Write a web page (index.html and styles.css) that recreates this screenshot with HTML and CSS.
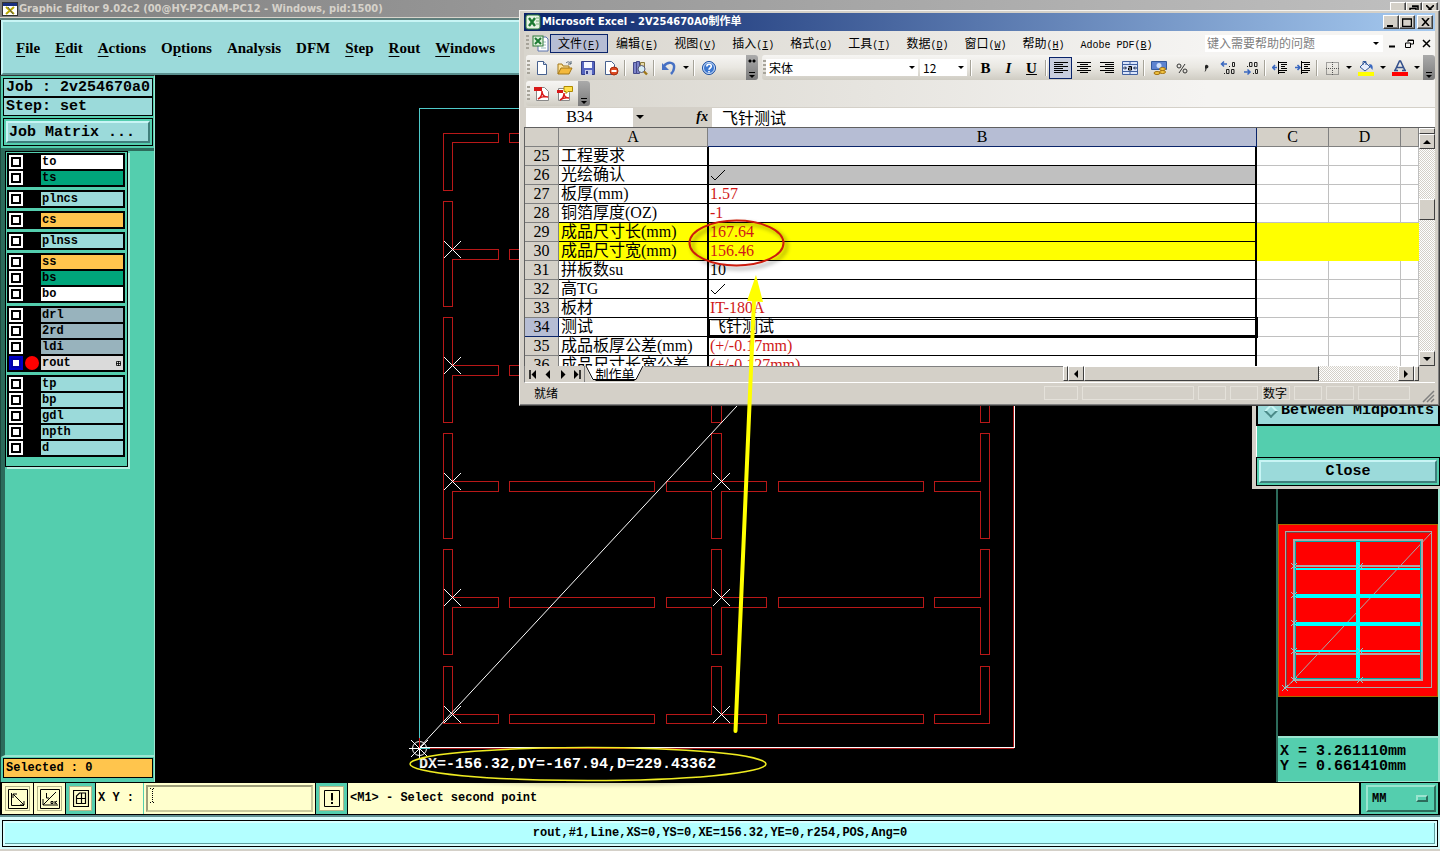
FILE: index.html
```
<!DOCTYPE html>
<html lang="zh-CN">
<head>
<meta charset="utf-8">
<title>Graphic Editor 9.02c2</title>
<link rel="stylesheet" href="styles.css">
</head>
<body>
<div class="desktop">
  <header class="app-title">
    <svg class="app-icon" width="16" height="14" viewBox="0 0 16 14"><rect x=".5" y=".5" width="15" height="13" fill="#fff" stroke="#333"/><rect x="1" y="1" width="14" height="3" fill="#1a2f80"/><path d="M4 5l8 7M12 5l-8 7" stroke="#b8a800" stroke-width="2"/><path d="M6 5l5 7" stroke="#555"/></svg>
    <span class="app-name">Graphic Editor 9.02c2 (00@HY-P2CAM-PC12 - Windows, pid:1500)</span>
    <div class="app-buttons">
      <button class="winbtn" aria-label="Minimize app"></button><button class="winbtn" aria-label="Restore app"><svg width="10" height="9" viewBox="0 0 10 9"><path d="M3 1h6v5H7M1 3.500h6v5H1zM3 1.500h6" fill="none" stroke="#000" stroke-width="1.500"/></svg></button><button class="winbtn" aria-label="Close app"><svg width="8" height="8" viewBox="0 0 8 8"><path d="M0 0l8 8M8 0L0 8" stroke="#000" stroke-width="1.600"/></svg></button>
    </div>
  </header>

  <nav class="app-menu">
    <button><u>F</u>ile</button><button><u>E</u>dit</button><button><u>A</u>ctions</button><button>O<u>p</u>tions</button><button>Analysis</button><button>DFM</button><button><u>S</u>tep</button><button><u>R</u>out</button><button><u>W</u>indows</button>
  </nav>

  <main class="workspace">
    <aside class="sidebar">
      <div class="job-info">
        <div class="job-line">Job : 2v254670a0</div>
        <div class="job-line">Step: set</div>
      </div>
      <div class="matrix-frame"><button class="bevel-btn matrix-btn">Job Matrix ...</button></div>
      <div class="layers-well">
        <div class="layers">
          <div class="group">
            <label class="layer"><input type="checkbox"><i class="dot"></i><span class="name white">to</span></label>
            <label class="layer"><input type="checkbox"><i class="dot"></i><span class="name green">ts</span></label>
          </div>
          <div class="group"><label class="layer"><input type="checkbox"><i class="dot"></i><span class="name">plncs</span></label></div>
          <div class="group"><label class="layer"><input type="checkbox"><i class="dot"></i><span class="name orange">cs</span></label></div>
          <div class="group"><label class="layer"><input type="checkbox"><i class="dot"></i><span class="name">plnss</span></label></div>
          <div class="group">
            <label class="layer"><input type="checkbox"><i class="dot"></i><span class="name orange">ss</span></label>
            <label class="layer"><input type="checkbox"><i class="dot"></i><span class="name green">bs</span></label>
            <label class="layer"><input type="checkbox"><i class="dot"></i><span class="name white">bo</span></label>
          </div>
          <div class="group">
            <label class="layer"><input type="checkbox"><i class="dot"></i><span class="name slate">drl</span></label>
            <label class="layer"><input type="checkbox"><i class="dot"></i><span class="name slate">2rd</span></label>
            <label class="layer"><input type="checkbox"><i class="dot"></i><span class="name slate">ldi</span></label>
            <label class="layer"><input type="checkbox" checked><i class="dot on"></i><span class="name gray">rout<svg width="5" height="5" viewBox="0 0 5 5"><path d="M.5.5h4v4h-4zM2.500 0v5M0 2.500h5" fill="none" stroke="#000" stroke-width=".8"/></svg></span></label>
          </div>
          <div class="group">
            <label class="layer"><input type="checkbox"><i class="dot"></i><span class="name">tp</span></label>
            <label class="layer"><input type="checkbox"><i class="dot"></i><span class="name">bp</span></label>
            <label class="layer"><input type="checkbox"><i class="dot"></i><span class="name">gdl</span></label>
            <label class="layer"><input type="checkbox"><i class="dot"></i><span class="name">npth</span></label>
            <label class="layer"><input type="checkbox"><i class="dot"></i><span class="name">d</span></label>
          </div>
        </div>
      </div>
      <div class="selected">Selected : 0</div>
    </aside>

    <section class="board">
      <svg class="board-art" width="1121" height="707" viewBox="155 75 1121 707" shape-rendering="crispEdges">
        <defs>
          <g id="joint">
            <path d="M443.500 201.500H452.500V249.500H498.500V259.500H452.500V306.500H443.500Z"/>
            <path d="M509.500 249.500H654.500V259.500H509.500ZM778.500 249.500H923.500V259.500H778.500Z"/>
            <path d="M711.500 201.500H721.500V249.500H766.500V259.500H721.500V306.500H711.500V259.500H666.500V249.500H711.500Z"/>
            <path d="M989.500 201.500H980.500V249.500H934.500V259.500H980.500V306.500H989.500Z"/>
          </g>
          <path id="cross" d="M-8.500-8.500L8.500 8.500M8.500-8.500L-8.500 8.500"/>
        </defs>
        <path d="M419.500 748V108.500H1014" fill="none" stroke="#4fc9c9"/>
        <path d="M419 748.500H1013.500V108" fill="none" stroke="#a81414"/>
        <path d="M419 747.500H1014.500V108" fill="none" stroke="#fff"/>
        <g fill="none" stroke="#b91818">
          <path d="M443.500 190.500V133.500H498.500V142.500H452.500V190.500ZM509.500 133.500H654.500V142.500H509.500Z"/>
          <use href="#joint"/><use href="#joint" y="116"/><use href="#joint" y="232"/><use href="#joint" y="348"/>
          <path d="M443.500 666.500H452.500V714.500H498.500V723.500H443.500ZM509.500 714.500H654.500V723.500H509.500ZM711.500 666.500H721.500V714.500H766.500V723.500H666.500V714.500H711.500ZM778.500 714.500H923.500V723.500H778.500ZM980.500 666.500H989.500V723.500H934.500V714.500H980.500Z"/>
        </g>
        <g stroke="#fff" shape-rendering="auto">
          <path d="M419 748L1014 108"/>
          <use href="#cross" x="452.500" y="249.500"/><use href="#cross" x="452.500" y="365.500"/><use href="#cross" x="452.500" y="481.500"/><use href="#cross" x="452.500" y="597.500"/><use href="#cross" x="452.500" y="714.500"/>
          <use href="#cross" x="721.500" y="481.500"/><use href="#cross" x="721.500" y="597.500"/><use href="#cross" x="721.500" y="714.500"/>
        </g>
        <g fill="none" stroke="#fff" shape-rendering="auto"><circle cx="419.500" cy="748.500" r="7"/><path d="M409 748.500h21M419.500 738v21M411 740l17 17M428 740l-17 17"/></g>
        <path d="M419.500 738v10" stroke="#d01818"/><path d="M420 748.500h10" stroke="#4fc9c9"/>
        <text class="readout" x="419" y="768">DX=-156.32,DY=-167.94,D=229.43362</text>
      </svg>
    </section>

    <aside class="overview">
      <div class="overview-map">
        <svg width="100%" viewBox="1278 524 160 173" shape-rendering="crispEdges">
          <rect x="1278.500" y="524.500" width="159" height="172" fill="#f00" stroke="#a86a00"/>
          <g fill="none" stroke="#a9a9a9"><rect x="1285.500" y="531.500" width="146" height="156"/><rect x="1294" y="540" width="128" height="140" stroke-width="2"/><path d="M1286 688L1431 533" shape-rendering="auto"/><path d="M1294 566h128M1294 654h128" stroke-width="2"/></g>
          <path d="M1286.500 687V532.500H1430" fill="none" stroke="#744"/>
          <path d="M1358 540v140" stroke="#0ff" stroke-width="4"/><path d="M1294 596h128M1294 624h128" stroke="#0ff" stroke-width="4"/><path d="M1294 569h128M1294 651h128" stroke="#0ff" stroke-width="2"/>
          <rect x="1295.500" y="541.500" width="125" height="137" fill="none" stroke="#0aa"/>
          <path d="M1291 563l6 6m0-6l-6 6M1291 592l6 6m0-6l-6 6M1291 620l6 6m0-6l-6 6M1291 648l6 6m0-6l-6 6M1291 677l6 6m0-6l-6 6M1357 563l6 6m0-6l-6 6M1357 648l6 6m0-6l-6 6M1357 677l6 6m0-6l-6 6M1282 685l6 6m0-6l-6 6" stroke="#8cc" fill="none"/>
        </svg>
      </div>
      <div class="coords"><div>X = 3.261110mm</div><div>Y = 0.661410mm</div></div>
    </aside>
  </main>

  <section class="command-bar">
    <button class="tool" aria-label="Zoom area"><svg width="20" height="20" viewBox="0 0 20 20" fill="none" stroke="#000"><path d="M.5.500h19v19H.5zM3.500 4v12.500H16M5 5l11 11M5 9V5h4M16 12v4h-4"/></svg></button>
    <button class="tool" aria-label="Angle"><svg width="20" height="20" viewBox="0 0 20 20" fill="none" stroke="#000"><path d="M.5.500h19v19H.5zM16 3L3 16h15M6.500 4v5H9M3 10v6M11 12.500h2v2h-2zM15 12v3M17 12l-2 1.500 2 1.500"/></svg></button>
    <button class="tool framed" aria-label="Grid"><svg width="16" height="17" viewBox="0 0 16 17" fill="none" stroke="#000"><path d="M.5.500h15v16H.5zM3.500 13.500V6l3-3h6v10.500zM8.500 3v11M3 8.500h10" stroke-width="1.200"/></svg></button>
    <label class="xy-label" for="xy">X Y :</label>
    <div class="xy-field">
      <input class="xy-input" id="xy" type="text">
      <svg class="ibeam" width="5" height="15" viewBox="0 0 5 15" shape-rendering="crispEdges"><path d="M2.500 1v13M0 .5h2M3 .5h2M0 14.500h2M3 14.500h2" stroke="#000" stroke-dasharray="1 1"/></svg>
    </div>
    <button class="tool framed warn" aria-label="Alert"><svg width="16" height="17" viewBox="0 0 16 17"><path d="M.5.500h15v16H.5z" fill="none" stroke="#000"/><path d="M8 3v7.500M8 12v2" stroke="#000" stroke-width="2"/></svg></button>
    <div class="message">&lt;M1&gt; - Select second point</div>
    <div class="unit-frame"><button class="unit">MM<i class="unit-mark"></i></button></div>
  </section>
  <footer class="info-bar"><div class="info-text">rout,#1,Line,XS=0,YS=0,XE=156.32,YE=0,r254,POS,Ang=0</div></footer>

  <section class="dialog">
    <label class="dialog-option"><input type="radio" name="snap"><span>Between Midpoints</span></label>
    <div class="dialog-foot"><button class="bevel-btn close-btn">Close</button></div>
  </section>

  <section class="excel">
    <header class="xl-title">
      <svg width="16" height="16" viewBox="0 0 16 16"><rect x="1" y="1" width="14" height="14" rx="2" fill="#e8f3e4" stroke="#2f7d3b"/><path d="M4 4l6 8M10 4l-6 8" stroke="#1d7a33" stroke-width="2.400"/><path d="M11 4h3M11 7h3M11 10h3" stroke="#7ab07a"/></svg>
      <h1>Microsoft Excel - 2V254670A0制作单</h1>
      <button class="winbtn" aria-label="Minimize"><svg width="10" height="9" viewBox="0 0 10 9"><path d="M1 8h6" stroke="#000" stroke-width="2"/></svg></button><button class="winbtn" aria-label="Maximize"><svg width="10" height="9" viewBox="0 0 10 9"><path d="M.5 1v7.500h9V1M0 1h10" fill="none" stroke="#000" stroke-width="1.500"/></svg></button><button class="winbtn gap" aria-label="Close"><svg width="9" height="8" viewBox="0 0 9 8"><path d="M1 0l7 8M8 0L1 8" stroke="#000" stroke-width="1.600"/></svg></button>
    </header>

    <nav class="xl-menu">
      <i class="grip"></i>
      <svg width="17" height="17" viewBox="0 0 17 17"><path d="M6 2h8l2 2v12H6z" fill="#fff" stroke="#5a73ae"/><path d="M9 7h5M9 10h5M9 13h5" stroke="#9bb"/><rect x="1" y="1" width="10" height="10" fill="#dff0dc" stroke="#2f7d3b"/><path d="M3 3l6 6M9 3L3 9" stroke="#1d7a33" stroke-width="2"/></svg>
      <button class="active">文件<span>(<u>F</u>)</span></button><button>编辑<span>(<u>E</u>)</span></button><button>视图<span>(<u>V</u>)</span></button><button>插入<span>(<u>I</u>)</span></button><button>格式<span>(<u>O</u>)</span></button><button>工具<span>(<u>T</u>)</span></button><button>数据<span>(<u>D</u>)</span></button><button>窗口<span>(<u>W</u>)</span></button><button>帮助<span>(<u>H</u>)</span></button><button><span>Adobe PDF(<u>B</u>)</span></button>
      <div class="help-box"><input type="text" placeholder="键入需要帮助的问题" aria-label="帮助"><i class="caret"></i></div>
      <button class="mini" aria-label="Minimize sheet"><svg width="9" height="9" viewBox="0 0 9 9"><path d="M1 7.500h6" stroke="#000" stroke-width="2"/></svg></button>
      <button class="mini" aria-label="Restore sheet"><svg width="9" height="9" viewBox="0 0 9 9"><path d="M3 3V1h5.500v4H6M.5 4h5v4.500h-5zM3 1.500h5" fill="none" stroke="#000"/></svg></button>
      <button class="mini last" aria-label="Close sheet"><svg width="9" height="9" viewBox="0 0 9 9"><path d="M1 1l7 7M8 1L1 8" stroke="#000" stroke-width="1.500"/></svg></button>
    </nav>

    <div class="xl-toolbars">
      <div class="toolbar std">
        <i class="grip"></i>
        <button aria-label="新建"><svg viewBox="0 0 16 16"><path d="M3.500 1.500h6l3 3v10h-9z" fill="#fff" stroke="#47618f"/><path d="M9.500 1.500v3h3" fill="#cfd9ec" stroke="#47618f"/></svg></button>
        <button aria-label="打开"><svg viewBox="0 0 16 16"><path d="M1 14V4h4l1 2h6v2" fill="#ffe49a" stroke="#a37716"/><path d="M1 14l3-6h11l-3 6z" fill="#f3b93c" stroke="#a37716"/><path d="M9 3c2-2 4-1 5 1m0-3v3h-3" fill="none" stroke="#567"/></svg></button>
        <button aria-label="保存"><svg viewBox="0 0 16 16"><path d="M1.500 1.500h13v13h-13z" fill="#5565c0" stroke="#353f88"/><path d="M4 2h8v6H4z" fill="#f4f6ff"/><path d="M5 10h7v5H5z" fill="#c8cdea"/><path d="M6 11h2v3H6z" fill="#353f88"/></svg></button>
        <button aria-label="权限"><svg viewBox="0 0 16 16"><path d="M2.500 1.500h6l3 3v10h-9z" fill="#fff" stroke="#47618f"/><circle cx="11" cy="11" r="4" fill="#dd4a22" stroke="#a52b0c"/><path d="M8.500 11h5" stroke="#fff" stroke-width="2"/></svg></button>
        <i class="sep"></i>
        <button aria-label="信息检索"><svg viewBox="0 0 16 16"><path d="M1.500 2.500h3v11h-3zM4.500 1.500h3v12h-3z" fill="#7d83c8" stroke="#454a8a"/><path d="M8.500 2.500h4v9h-4z" fill="#e6d9a8" stroke="#8a7a3c"/><circle cx="9.500" cy="9" r="3.500" fill="#d5ecf5" stroke="#557"/><path d="M12 11.500l3 3" stroke="#a07818" stroke-width="2.400"/></svg></button>
        <i class="sep"></i>
        <button aria-label="撤消"><svg viewBox="0 0 16 16"><path d="M3 6c4-5 11-4 10 2 0 3-2 5-3 6" fill="none" stroke="#4771c4" stroke-width="2.500"/><path d="M1 3v7h7z" fill="#4771c4"/></svg></button>
        <button class="drop" aria-label="撤消列表"><i class="caret"></i></button>
        <i class="sep"></i>
        <button aria-label="帮助主题"><svg viewBox="0 0 16 16"><circle cx="8" cy="8" r="6.500" fill="#3d78d0" stroke="#1d4f9f"/><circle cx="8" cy="8" r="5.500" fill="none" stroke="#cfe0fa"/><path d="M5.800 6.500c0-3 4.500-3 4.500-.3C10.300 8 8 8 8 9.800M8 11v1.600" fill="none" stroke="#fff" stroke-width="1.600"/></svg></button>
        <i class="cap more"></i>
      </div>
      <div class="toolbar fmt">
        <i class="grip"></i>
        <span class="combo font"><select aria-label="字体"><option>宋体</option></select><i class="caret"></i></span>
        <span class="combo size"><select aria-label="字号"><option>12</option></select><i class="caret"></i></span>
        <i class="sep"></i>
        <button class="glyph">B</button><button class="glyph italic">I</button><button class="glyph under">U</button>
        <i class="sep"></i>
        <button class="pressed" aria-label="左对齐"><svg viewBox="0 0 16 16"><path d="M1 2.500h14M1 4.500h9M1 6.500h14M1 8.500h9M1 10.500h14M1 12.500h9" stroke="#000"/></svg></button>
        <button aria-label="居中"><svg viewBox="0 0 16 16"><path d="M1 2.500h14M4 4.500h8M1 6.500h14M4 8.500h8M1 10.500h14M4 12.500h8" stroke="#000"/></svg></button>
        <button aria-label="右对齐"><svg viewBox="0 0 16 16"><path d="M1 2.500h14M6 4.500h9M1 6.500h14M6 8.500h9M1 10.500h14M6 12.500h9" stroke="#000"/></svg></button>
        <button aria-label="合并居中"><svg viewBox="0 0 16 16"><path d="M.5 1.500h15v13H.5z" fill="#dbe5fa" stroke="#3f5f9f"/><path d="M.5 4.500h15M.5 11.500h15M8 1v3M8 12v3" stroke="#3f5f9f"/><path d="M1 8h3M12 8h3M3 6.500L4.500 8 3 9.500M13 6.500L11.500 8 13 9.500" fill="none" stroke="#124"/><path d="M6.500 6.500h3v3.500h-3v-2h3" fill="none" stroke="#000"/></svg></button>
        <i class="sep"></i>
        <button aria-label="货币"><svg viewBox="0 0 16 16"><path d="M.5 1.500h15v8H.5z" fill="#5d83cf" stroke="#345a9c"/><circle cx="8" cy="5.500" r="2.500" fill="#cfe0fa"/><ellipse cx="11.500" cy="9" rx="3" ry="1.500" fill="#f4c542" stroke="#a07010"/><ellipse cx="11.500" cy="12" rx="3" ry="1.500" fill="#f4c542" stroke="#a07010"/><ellipse cx="6" cy="13" rx="3" ry="1.500" fill="#f4c542" stroke="#a07010"/></svg></button>
        <button aria-label="百分比"><svg viewBox="0 0 16 16"><circle cx="5" cy="6" r="2" fill="none" stroke="#333"/><circle cx="11" cy="11" r="2" fill="none" stroke="#333"/><path d="M11 4L5 13" stroke="#333"/></svg></button>
        <button aria-label="千位分隔"><svg viewBox="0 0 16 16"><path d="M8 6a1.800 1.800 0 1 1 1.500 2.500C9.500 10 9 11 7.500 12c1-2 1-3 .5-4z" fill="#222"/></svg></button>
        <button aria-label="增加小数"><svg viewBox="0 0 16 16"><path d="M1 4h6M4 1.500L1.500 4 4 6.500" fill="none" stroke="#3a68c0" stroke-width="1.500"/><g fill="none" stroke="#222"><path d="M9 6.500h1M12.500 2.500h2v4h-2zM4 13.500h1M6.500 9.500h2.500v4H6.500zM11.500 9.500h2.500v4h-2.500z"/></g></svg></button>
        <button aria-label="减少小数"><svg viewBox="0 0 16 16"><path d="M1 12h6M4.500 9.500L7 12l-2.500 2.500" fill="none" stroke="#3a68c0" stroke-width="1.500"/><g fill="none" stroke="#222"><path d="M4 6.500h1M6.500 2.500h2.500v4H6.500zM11.500 2.500h2.500v4h-2.500zM10 13.500h1M12.500 9.500h2v4h-2z"/></g></svg></button>
        <i class="sep"></i>
        <button aria-label="减少缩进"><svg viewBox="0 0 16 16"><path d="M7 2.500h8M9 4.500h6M9 6.500h4M9 8.500h6M7 10.500h8M7 12.500h6M6.500 1v13" stroke="#000"/><path d="M0 7.500h5M3 5L.8 7.500 3 10" fill="none" stroke="#3a68c0" stroke-width="1.600"/></svg></button>
        <button aria-label="增加缩进"><svg viewBox="0 0 16 16"><path d="M7 2.500h8M9 4.500h6M9 6.500h4M9 8.500h6M7 10.500h8M7 12.500h6M6.500 1v13" stroke="#000"/><path d="M0 7.500h5M2.500 5L5 7.500 2.500 10" fill="none" stroke="#3a68c0" stroke-width="1.600"/></svg></button>
        <i class="sep"></i>
        <button aria-label="边框"><svg viewBox="0 0 16 16"><path d="M2.500 2.500h12v12h-12zM8.500 2v13M2 8.500h13" fill="none" stroke="#555" stroke-dasharray="1 1"/></svg></button>
        <button class="drop" aria-label="边框列表"><i class="caret"></i></button>
        <button aria-label="填充颜色"><svg viewBox="0 0 16 16"><path d="M2 7l5-5 5 5-5 4z" fill="#e8eefb" stroke="#345a9c"/><path d="M5 5V1.500h3V5" fill="none" stroke="#345a9c"/><path d="M11 4c4 0 4 3 3.500 6-1-1-1.500-2-2.500-3z" fill="#3a68c0"/><path d="M0 12h16v4H0z" fill="#ff0"/></svg></button>
        <button class="drop" aria-label="填充列表"><i class="caret"></i></button>
        <button aria-label="字体颜色"><svg viewBox="0 0 16 16"><path d="M3 10.500L7.500 1h1L13 10.500M5 7.500h6M2 10.500h4M10 10.500h4" fill="none" stroke="#34508c" stroke-width="1.600"/><path d="M0 12h16v4H0z" fill="#f00"/></svg></button>
        <button class="drop" aria-label="字体颜色列表"><i class="caret"></i></button>
        <i class="cap"></i>
      </div>
    </div>
    <div class="xl-toolbars">
      <div class="toolbar pdf">
        <i class="grip"></i>
        <button aria-label="转换为 PDF"><svg viewBox="0 0 16 16"><path d="M2.500 1.500h8l4 4v9h-12z" fill="#fff" stroke="#888"/><path d="M0 1h8v4H0z" fill="#d81818"/><path d="M4 13c4-2 4-5 4-8 0 4 2 6 6 6-4-1-7 0-10 2z" fill="none" stroke="#d81818" stroke-width="1.400"/></svg></button>
        <button aria-label="PDF 审阅"><svg viewBox="0 0 16 16"><path d="M1.500 2.500h8l3 4v8h-11z" fill="#fff" stroke="#888"/><path d="M0 4h6v3H0z" fill="#d81818"/><path d="M3 14c4-2 4-5 4-7 0 3 2 5 5 5-4-1-6 0-9 2z" fill="none" stroke="#d81818" stroke-width="1.400"/><path d="M7 .500h8.500v5H11l-2 2v-2H7z" fill="#ffe14a" stroke="#b08a00"/></svg></button>
        <i class="cap"></i>
      </div>
    </div>

    <div class="formula-bar">
      <input class="name-box" type="text" value="B34" aria-label="名称框"><i class="caret"></i>
      <span class="fx">fx</span>
      <input class="formula" type="text" value="飞针测试" aria-label="编辑栏">
    </div>

    <div class="sheet">
      <div class="grid">
        <table>
          <colgroup><col class="c-num"><col class="c-a"><col><col class="c-c"><col class="c-c"><col class="c-e"></colgroup>
          <thead><tr><th></th><th>A</th><th class="sel">B</th><th>C</th><th>D</th><th></th></tr></thead>
          <tbody>
            <tr><th>25</th><td>工程要求</td><td></td><td></td><td></td><td></td></tr>
            <tr><th>26</th><td>光绘确认</td><td class="shade"><svg width="16" height="12" viewBox="0 0 16 12"><path d="M1 7l4 4L15 1" fill="none" stroke="#000"/></svg></td><td></td><td></td><td></td></tr>
            <tr><th>27</th><td>板厚(mm)</td><td class="red">1.57</td><td></td><td></td><td></td></tr>
            <tr><th>28</th><td>铜箔厚度(OZ)</td><td class="red">-1</td><td></td><td></td><td></td></tr>
            <tr class="hot"><th>29</th><td>成品尺寸长(mm)</td><td class="red">167.64</td><td></td><td></td><td></td></tr>
            <tr class="hot"><th>30</th><td>成品尺寸宽(mm)</td><td class="red">156.46</td><td></td><td></td><td></td></tr>
            <tr><th>31</th><td>拼板数su</td><td>10</td><td></td><td></td><td></td></tr>
            <tr><th>32</th><td>高TG</td><td><svg width="16" height="12" viewBox="0 0 16 12"><path d="M1 7l4 4L15 1" fill="none" stroke="#000"/></svg></td><td></td><td></td><td></td></tr>
            <tr><th>33</th><td>板材</td><td class="red">IT-180A</td><td></td><td></td><td></td></tr>
            <tr><th class="sel">34</th><td>测试</td><td class="current">飞针测试</td><td></td><td></td><td></td></tr>
            <tr><th>35</th><td>成品板厚公差(mm)</td><td class="red">(+/-0.17mm)</td><td></td><td></td><td></td></tr>
            <tr><th>36</th><td>成品尺寸长宽公差</td><td class="red">(+/-0.127mm)</td><td></td><td></td><td></td></tr>
          </tbody>
        </table>
      </div>
      <div class="vscroll">
        <i class="split-h"></i>
        <button class="sb-btn" aria-label="向上"><i class="arr up"></i></button>
        <div class="v-before"></div><div class="v-thumb"></div><div class="v-after"></div>
        <button class="sb-btn" aria-label="向下"><i class="arr down"></i></button>
      </div>
    </div>

    <div class="tab-row">
      <button class="nav" aria-label="首张"><svg width="8" height="9" viewBox="0 0 8 9"><path d="M1 0v9" stroke="#000" stroke-width="1.500"/><path d="M7 0v9L2.500 4.500z"/></svg></button><button class="nav" aria-label="上一张"><svg width="8" height="9" viewBox="0 0 8 9"><path d="M6 0v9L1.500 4.500z"/></svg></button><button class="nav" aria-label="下一张"><svg width="8" height="9" viewBox="0 0 8 9"><path d="M2 0v9l4.500-4.500z"/></svg></button><button class="nav" aria-label="末张"><svg width="8" height="9" viewBox="0 0 8 9"><path d="M7 0v9" stroke="#000" stroke-width="1.500"/><path d="M1 0v9l4.500-4.500z"/></svg></button>
      <button class="tab"><svg width="60" height="15" viewBox="0 0 60 15"><path d="M0 0l7 14h44l8-14z" fill="#fff"/><path d="M1 0l7 13.500h43L58 0" fill="none" stroke="#000"/></svg><span>制作单</span></button>
      <div class="tab-space"></div>
      <div class="hscroll">
        <i class="split-v"></i>
        <button class="sb-btn" aria-label="向左"><i class="arr left"></i></button>
        <div class="h-thumb"></div><div class="h-track"></div>
        <button class="sb-btn" aria-label="向右"><i class="arr right"></i></button>
        <i class="split-v"></i>
      </div>
    </div>

    <footer class="status">
      <span class="ready">就绪</span>
      <i class="cell w36"></i><i class="cell w112"></i><i class="cell w28"></i><i class="cell w28"></i><span class="cell w28">数字</span><i class="cell w28"></i><i class="cell w28"></i><i class="cell w52"></i>
      <svg width="14" height="14" viewBox="0 0 14 14"><path d="M2 13L13 2M6 13l7-7M10 13l3-3" stroke="#808080" stroke-width="1.500"/></svg>
    </footer>
  </section>

  <svg class="notes" width="1440" height="851" viewBox="0 0 1440 851">
    <defs><filter id="soft" x="-20%" y="-30%" width="150%" height="180%"><feDropShadow dx="3" dy="3" stdDeviation="2" flood-color="#000" flood-opacity=".45"/></filter></defs>
    <ellipse cx="736.500" cy="243" rx="47" ry="22.500" fill="none" stroke="#cc1b0c" stroke-width="2" filter="url(#soft)"/>
    <path d="M735.500 731L754 300" stroke="#ff0" stroke-width="4" stroke-linecap="round"/>
    <path d="M756 275l7 27-16-1z" fill="#ff0"/>
    <ellipse cx="588" cy="764" rx="178" ry="16.500" fill="none" stroke="#f0ec20" stroke-width="1.500" filter="url(#soft)"/>
  </svg>
</div>
</body>
</html>
```
FILE: styles.css
```
* { box-sizing: border-box; }
body { margin: 0; background: #000; }
button, input, select { font: inherit; color: inherit; margin: 0; padding: 0; border: 0; border-radius: 0; background: none; }
i { display: block; font-style: normal; }
svg { display: block; flex: none; }

.desktop {
  position: relative; display: flex; flex-direction: column; min-height: 100vh; overflow: hidden;
  font: bold 12px/14px "Liberation Mono", "Noto Sans CJK SC", monospace; color: #000;
}

/* main application title and menu */
.app-title {
  display: flex; align-items: center; gap: 1px; height: 20px; padding-left: 2px;
  background: linear-gradient(90deg, #808080, #c0c0c0); border-bottom: 2px solid #5f7f7c; box-shadow: inset 0 -1px #d8d4cc;
  font: bold 11px/16px "DejaVu Sans Condensed", "Open Sans", sans-serif; color: #d6d2ca;
}
.app-name { flex: 1; white-space: nowrap; }
.app-buttons { display: flex; padding-right: 2px; }
.winbtn {
  display: flex; align-items: center; justify-content: center; width: 16px; height: 14px; background: #d4d0c8;
  border: 1px solid; border-color: #fff #404040 #404040 #fff; box-shadow: inset -1px -1px #808080;
}
.winbtn.gap { margin-left: 2px; }
.app-menu {
  display: flex; align-items: center; gap: 15px; height: 55px; padding: 0 13px; margin-left: 1px;
  background: #9bdada; border: 2px solid; border-color: #c8f5f5 #4f8584 #5a8f8e #c8f5f5; box-shadow: 0 1px #dff;
  font: bold 15px/20px "Liberation Serif", serif;
}
.app-menu u { text-underline-offset: 3px; }

.workspace { flex: 1; display: flex; min-height: 0; }

/* left column */
.sidebar { width: 155px; display: flex; flex-direction: column; background: #54ceae; border-left: 1px solid #1c4a3e; border-top: 1px solid #333; border-right: 1px solid #9be5d0; }
.job-info { padding: 2px 1px 0 2px; font-size: 15px; line-height: 17px; }
.job-line { height: 19px; padding-left: 2px; background: #9bdada; border: 1px solid #000; white-space: nowrap; }
.matrix-frame { margin: 2px 1px 2px 2px; padding: 2px; border: 1px solid #000; }
.bevel-btn { display: block; width: 100%; background: #9bdada; border: 2px solid; border-color: #c8f5f5 #3f7f7c #3f7f7c #c8f5f5; font-size: 15px; line-height: 17px; }
.matrix-btn { height: 22px; text-align: left; padding-left: 1px; }
.layers-well { flex: 1; border-top: 3px solid #2c6b5b; border-left: 4px solid #2c6b5b; border-bottom: 2px solid #9be5d0; }
.layers { width: 123px; padding: 1px 2px 9px 1px; border: 1px solid #000; box-shadow: 2px 2px #b5eee0; display: flex; flex-direction: column; gap: 3px; }
.group { display: flex; flex-direction: column; gap: 2px; padding: 2px; background: #000; }
.layer { display: flex; align-items: center; gap: 2px; height: 14px; }
.layer input { appearance: none; width: 10px; height: 10px; margin: 2px; border: 2px solid #000; background: #fff; box-shadow: 0 0 0 2px #fff; }
.layer input:checked { border-color: #0000a8; box-shadow: 0 0 0 2px #0000c8; }
.dot { width: 14px; height: 14px; border-radius: 50%; }
.dot.on { background: #f00; }
.name { flex: 1; display: flex; align-items: center; justify-content: space-between; height: 14px; padding: 0 2px 0 1px; background: #9bdada; }
.name.white { background: #fff; }
.name.green { background: #00a57b; }
.name.orange { background: #ffc54d; }
.name.slate { background: #98b3bd; }
.name.gray { background: #dadada; }
.selected { height: 20px; margin: 1px 1px 4px 2px; padding-left: 2px; background: #ffc54d; border: 1px solid #000; line-height: 18px; }

/* drawing canvas */
.board { flex: 1; position: relative; overflow: hidden; background: #000; }
.board-art { position: absolute; left: 0; top: 0; }
.readout { font: bold 15px "Liberation Mono", monospace; fill: #fff; }

/* right column */
.overview { width: 164px; display: flex; flex-direction: column; justify-content: flex-end; border-left: 2px solid #2c6b5b; border-right: 2px solid #9be5d0; background: #000; }
.overview-map { padding-bottom: 39px; }
.coords { height: 46px; padding: 6px 2px 0; background: #54ceae; border: solid; border-width: 2px 0 1px; border-color: #9be5d0; font-size: 15px; line-height: 15px; white-space: nowrap; }

/* command line */
.command-bar { display: flex; height: 33px; padding-left: 2px; border-top: 1px solid #000; border-bottom: 1px solid #000; background: #000; }
.tool { display: flex; align-items: center; justify-content: center; width: 31px; margin-right: 1px; background: #ffffcd; border: 3px solid #ffffcd; outline: 1px solid #b5b58a; outline-offset: -4px; }
.tool.framed { width: 29px; border-color: #54ceae; }
.tool.warn { width: 31px; margin-left: 1px; }
.xy-label { width: 48px; padding-left: 2px; background: #ffffcd; line-height: 31px; white-space: nowrap; border-right: 1px solid #54ceae; }
.xy-field { position: relative; display: flex; width: 171px; padding: 2px; background: #ffffcd; }
.xy-input { flex: 1; min-width: 0; background: #ffffcd; border: 2px solid; border-color: #9f9f7a #c9c99c #c9c99c #9f9f7a; padding: 0 4px; }
.ibeam { position: absolute; left: 6px; top: 5px; }
.message { flex: 1; padding-left: 2px; background: #ffffcd; line-height: 31px; }
.unit-frame { width: 77px; margin-left: 2px; margin-right: 2px; padding: 2px 2px 2px 5px; background: #54ceae; }
.unit { width: 100%; height: 27px; display: flex; align-items: center; justify-content: space-between; padding: 0 6px 0 4px; border: 2px solid; border-color: #9be5d0 #2c6b5b #2c6b5b #9be5d0; }
.unit-mark { width: 12px; height: 7px; border: 2px solid; border-color: #9be5d0 #2c6b5b #2c6b5b #9be5d0; }
.info-bar { height: 36px; padding: 3px 2px 6px; background: #d7fafa; border-top: 2px solid #5f8f90; border-bottom: 2px solid #d4d0c8; }
.info-text { height: 27px; background: #b3ffff; border: 1px solid #000; box-shadow: inset 0 0 0 2px #d7ffff, inset -3px -3px #5f9f9f; text-align: center; line-height: 25px; }

/* snap dialog */
.dialog { position: absolute; right: 0; top: 379px; width: 188px; background: #54ceae; border: solid #d4d0c8; border-width: 4px 0 3px 4px; box-shadow: inset 1px 0 #fff; font-size: 15px; line-height: 17px; }
.dialog-option { display: flex; align-items: flex-end; gap: 5px; height: 43px; padding: 0 0 5px 8px; background: #9bdada; border: 2px solid #000; border-top: 0; white-space: nowrap; }
.dialog-option input { appearance: none; width: 10px; height: 10px; margin: 2px 0 3px; flex: none; border: 2px solid; border-color: #c8f5f5 #4a8a88 #4a8a88 #c8f5f5; transform: rotate(45deg); }
.dialog-foot { margin-top: 31px; padding: 2px; border: 1px solid #000; }
.close-btn { height: 23px; }

/* spreadsheet window */
.excel {
  position: absolute; left: 519px; right: 0; top: 10px; padding: 2px 4px; background: #d4d0c8;
  border: 1px solid; border-color: #f4f2ee #404040 #404040 #f4f2ee; box-shadow: inset -1px -1px #808080;
  font: 12px/16px "Noto Sans CJK SC", sans-serif;
}
.xl-title { display: flex; align-items: center; height: 18px; padding: 0 2px 0 1px; background: linear-gradient(90deg, #0a246a, #a6caf0); color: #fff; }
.xl-title h1 { flex: 1; margin: 0 0 0 1px; font: bold 11px/16px "DejaVu Sans Condensed", "Noto Sans CJK SC", sans-serif; white-space: nowrap; }
.xl-menu { display: flex; align-items: center; height: 24px; background: linear-gradient(90deg, #d8d5cd, #f5f4f2 75%); white-space: nowrap; }
.grip { width: 3px; height: 16px; margin: 0 1px 0 2px; flex: none; background: repeating-linear-gradient(#a7a49a 0 2px, transparent 2px 4px); }
.xl-menu button { height: 19px; padding: 0 7px; border: 1px solid transparent; }
.xl-menu button.active { background: #b6bdd4; border-color: #0a246a; }
.xl-menu button span { font: 10px/16px "Liberation Mono", monospace; }
.xl-menu > svg { margin: 0 1px 0 2px; }
.help-box { display: flex; align-items: center; width: 178px; height: 17px; margin: 0 1px 0 auto; background: #fff; }
.help-box input { flex: 1; min-width: 0; padding-left: 2px; }
.help-box input::placeholder { color: #808080; opacity: 1; }
.help-box .caret { margin-right: 4px; }
.xl-menu .mini { display: flex; align-items: center; width: 17px; padding: 0 3px; }
.caret { width: 0; height: 0; flex: none; border: 3px solid transparent; border-top-color: #000; border-bottom: 0; }

.xl-toolbars { display: flex; gap: 4px; height: 26px; padding: 0 0 1px 2px; background: linear-gradient(90deg, #d8d5cd, #f5f4f2 75%); }
.toolbar { display: flex; align-items: center; height: 25px; border-radius: 3px; background: linear-gradient(#f6f5f3, #e9e7e1 50%, #cfccc3); }
.toolbar .grip { margin: 0 0 0 1px; }
.toolbar.std { width: 232px; }
.toolbar.fmt { flex: 1; min-width: 0; }
.toolbar button { display: flex; align-items: center; justify-content: center; width: 23px; height: 22px; flex: none; }
.toolbar button svg { width: 16px; height: 16px; }
.toolbar button.drop { width: 11px; }
.toolbar button.pressed { background: #c9cede; border: 1px solid #0a246a; }
.toolbar button.glyph { font: bold 15px/20px "Liberation Serif", serif; }
.toolbar button.italic { font-style: italic; }
.toolbar button.under { text-decoration: underline; }
.sep { width: 1px; height: 16px; margin: 0 3px 0 2px; flex: none; background: #a6a399; box-shadow: 1px 0 #fff; }
.cap { position: relative; width: 12px; height: 25px; margin-left: auto; flex: none; border-radius: 0 3px 3px 0; background: linear-gradient(#aaa, #7b7b7b); }
.cap::after { content: ""; position: absolute; left: 3px; bottom: 2px; border: 3px solid transparent; border-top-color: #000; border-bottom: 0; }
.cap::before { content: ""; position: absolute; left: 3px; bottom: 7px; width: 6px; height: 1px; background: #000; }
.cap.more { background: radial-gradient(circle at 4px 6px, #000 1px, transparent 2px), radial-gradient(circle at 8px 6px, #000 1px, transparent 2px), linear-gradient(#aaa, #7b7b7b); }
.combo { display: flex; align-items: center; height: 17px; flex: none; background: #fff; padding-right: 3px; }
.combo select { flex: 1; min-width: 0; appearance: none; height: 17px; line-height: 17px; padding-left: 3px; }
.combo.font { width: 152px; }
.combo.size { width: 47px; margin: 0 1px 0 2px; }
.toolbar.pdf .cap { margin-left: 2px; }

.formula-bar { display: flex; align-items: center; height: 20px; margin-left: 2px; font: 16px/18px "Liberation Serif", "Noto Sans CJK SC", serif; }
.name-box { width: 107px; height: 19px; background: #fff; text-align: center; }
.formula-bar .caret { margin: 0 0 0 3px; border-width: 4px; border-bottom: 0; }
.fx { width: 68px; padding: 0 4px 0 0; text-align: right; font: italic bold 14px/18px "Liberation Serif", serif; }
.formula { flex: 1; min-width: 0; height: 19px; padding-left: 10px; background: #fff; }

.sheet { display: flex; height: 239px; border: solid #606060; border-width: 1px 0 0 1px; }
.grid { flex: 1; min-width: 0; overflow: hidden; background: #fff; }
table { width: 100%; table-layout: fixed; border-collapse: separate; border-spacing: 0; font: 16px/18px "Liberation Serif", "Noto Sans CJK SC", serif; }
.c-num { width: 34px; } .c-a { width: 149px; } .c-c { width: 72px; } .c-e { width: 18px; }
th, td { height: 19px; padding: 0 2px; border: solid #c0c0c0; border-width: 0 1px 1px 0; white-space: nowrap; line-height: 18px; overflow: hidden; }
th { font-weight: normal; background: #d4d0c8; border-color: #808080; }
th.sel { background: #b6bdd4; border-color: #0a246a; }
td { text-align: left; }
td:nth-child(2), td:nth-child(3) { border-color: #000; }
td:nth-child(3) { border-width: 0 2px 1px 1px; padding-left: 1px; }
td.red { color: #d01818; }
td.shade { background: #c0c0c0; }
.hot td { background: #ff0; }
.hot td:nth-child(n+4) { border-color: #ff0; }
td.current { outline: 3px double #000; outline-offset: -2px; }

.vscroll { width: 16px; display: flex; flex-direction: column; background: repeating-conic-gradient(#d4d0c8 0 25%, #fff 0 50%) 0 0 / 2px 2px; }
.split-h { height: 6px; background: #d4d0c8; border: 1px solid; border-color: #fff #404040 #404040 #fff; flex: none; }
.sb-btn { display: flex; align-items: center; justify-content: center; width: 16px; height: 15px; flex: none; background: #d4d0c8; border: 1px solid; border-color: #fff #404040 #404040 #fff; }
.v-before { flex: 50; } .v-after { flex: 132; }
.v-thumb { height: 21px; flex: none; }
.v-thumb, .h-thumb { background: #d4d0c8; border: 1px solid; border-color: #fff #404040 #404040 #fff; }
.arr { width: 0; height: 0; border: 4px solid transparent; }
.arr.up { border-bottom-color: #000; border-top: 0; }
.arr.down { border-top-color: #000; border-bottom: 0; }
.arr.left { border-right-color: #000; border-left: 0; }
.arr.right { border-left-color: #000; border-right: 0; }

.tab-row { display: flex; height: 17px; border-left: 1px solid #808080; border-bottom: 1px solid #fff; }
.nav { display: flex; align-items: center; justify-content: center; width: 15px; }
.nav:nth-child(4) { border-right: 1px solid #808080; }
.tab { position: relative; width: 60px; height: 15px; line-height: 15px; font-size: 13px; }
.tab svg { position: absolute; left: 0; top: 0; }
.tab span { position: relative; text-decoration: underline; }
.tab-space { flex: 418; border-top: 1px solid #808080; }
.hscroll { flex: 356; display: flex; height: 15px; margin-right: 16px; }
.split-v { width: 5px; flex: none; background: #d4d0c8; border: 1px solid; border-color: #fff #404040 #404040 #fff; }
.h-thumb { flex: 235; }
.h-track { flex: 80; background: repeating-conic-gradient(#d4d0c8 0 25%, #fff 0 50%) 0 0 / 2px 2px; }

.status { display: flex; align-items: center; gap: 4px; height: 20px; }
.ready { flex: 1; padding-left: 10px; }
.cell { height: 14px; border: 1px solid #e4e1da; line-height: 12px; white-space: nowrap; flex: none; }
.w36 { width: 34px; } .w112 { width: 112px; } .w28 { width: 28px; } .w52 { width: 52px; }
.status svg { margin-left: 7px; align-self: flex-end; }

.notes { position: absolute; left: 0; top: 0; pointer-events: none; }
```
